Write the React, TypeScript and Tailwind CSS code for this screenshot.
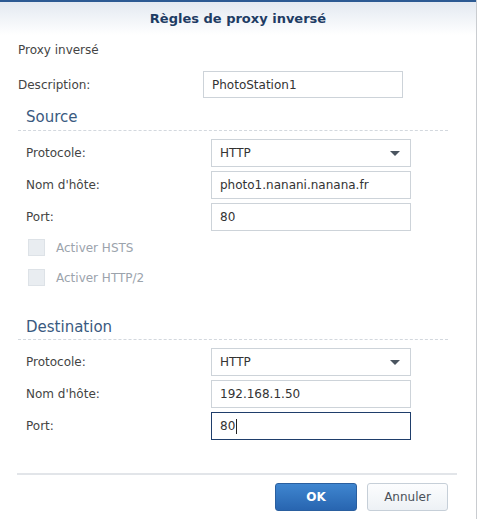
const Field = ({ value, focused }: { value: string; focused?: boolean }) => (
  <div
    className={`w-[200px] h-[28px] border bg-white flex items-center pl-[8px] text-[#333] ${
      focused ? 'border-[#1f3e6b]' : 'border-[#cdd3d9]'
    }`}
  >
    {value}
    {focused && <span className="inline-block w-px h-[15px] bg-[#222] ml-px" />}
  </div>
)

const Select = ({ value }: { value: string }) => (
  <div className="w-[200px] h-[28px] border border-[#cdd3d9] bg-white flex items-center justify-between pl-[8px] pr-[10px] text-[#333]">
    <span>{value}</span>
    <svg width="10" height="5" viewBox="0 0 10 5">
      <path d="M0 0 L10 0 L5 5 Z" fill="#4b5560" />
    </svg>
  </div>
)

const Row = ({ label, children }: { label: string; children: React.ReactNode }) => (
  <div className="flex items-center pl-[8px]">
    <div className="w-[185px]">{label}</div>
    {children}
  </div>
)

const Section = ({ title, className }: { title: string; className: string }) => (
  <div
    className={`w-[430px] pl-[8px] text-[15px] leading-[20px] text-[#3a5a80] border-b border-dashed border-[#d3d8de] ${className}`}
  >
    {title}
  </div>
)

const Check = ({ label, className }: { label: string; className?: string }) => (
  <div className={`flex items-center pl-[10px] gap-[11px] h-[17px] ${className ?? ''}`}>
    <div className="w-[17px] h-[17px] bg-[#e9edf1] border border-[#dde2e7]" />
    <span className="text-[#9ba3ac]">{label}</span>
  </div>
)

export default function App() {
  return (
    <div className="w-[479px] h-[519px] bg-white text-[12px] text-[#444] font-['Verdana','DejaVu_Sans',sans-serif]">
      <div className="w-[477px] h-full border-r border-[#c9ccd0] flex flex-col">
        <div className="h-[2px] bg-[#2c5a93]" />
        <div className="h-[33px] bg-gradient-to-b from-[#e3e9f1] to-white flex items-center justify-center text-[13px] font-bold text-[#1e3c64]">
          Règles de proxy inversé
        </div>

        <div className="px-[18px] flex flex-col">
          <div className="mt-[6px] h-[18px] leading-[18px]">Proxy inversé</div>

          <div className="mt-[12px] flex items-center">
            <div className="w-[185px]">Description:</div>
            <div className="w-[200px] h-[27px] border border-[#cdd3d9] flex items-center pl-[8px] text-[#333]">
              PhotoStation1
            </div>
          </div>

          {/* Source */}
          <Section title="Source" className="mt-[9px] pb-[3px]" />
          <div className="mt-[8px] flex flex-col gap-[4px]">
            <Row label="Protocole:">
              <Select value="HTTP" />
            </Row>
            <Row label="Nom d'hôte:">
              <Field value="photo1.nanani.nanana.fr" />
            </Row>
            <Row label="Port:">
              <Field value="80" />
            </Row>
          </div>
          <Check label="Activer HSTS" className="mt-[8px]" />
          <Check label="Activer HTTP/2" className="mt-[13px]" />

          {/* Destination */}
          <Section title="Destination" className="mt-[31px] pb-[2px]" />
          <div className="mt-[8px] flex flex-col gap-[4px]">
            <Row label="Protocole:">
              <Select value="HTTP" />
            </Row>
            <Row label="Nom d'hôte:">
              <Field value="192.168.1.50" />
            </Row>
            <Row label="Port:">
              <Field value="80" focused />
            </Row>
          </div>

          <div className="mt-[33px] -ml-px w-[440px] h-[2px] bg-[#e2e5e9]" />

          <div className="mt-[8px] w-[430px] flex justify-end gap-[10px]">
            <button className="w-[82px] h-[28px] rounded-[3px] border border-[#2a5f9f] bg-gradient-to-b from-[#3f86d0] to-[#2865b0] text-white font-semibold">
              OK
            </button>
            <button className="w-[81px] h-[28px] rounded-[3px] border border-[#c6cfd8] bg-gradient-to-b from-[#fcfdfe] to-[#edf1f5] text-[#4a5058]">
              Annuler
            </button>
          </div>
        </div>
      </div>
    </div>
  )
}
